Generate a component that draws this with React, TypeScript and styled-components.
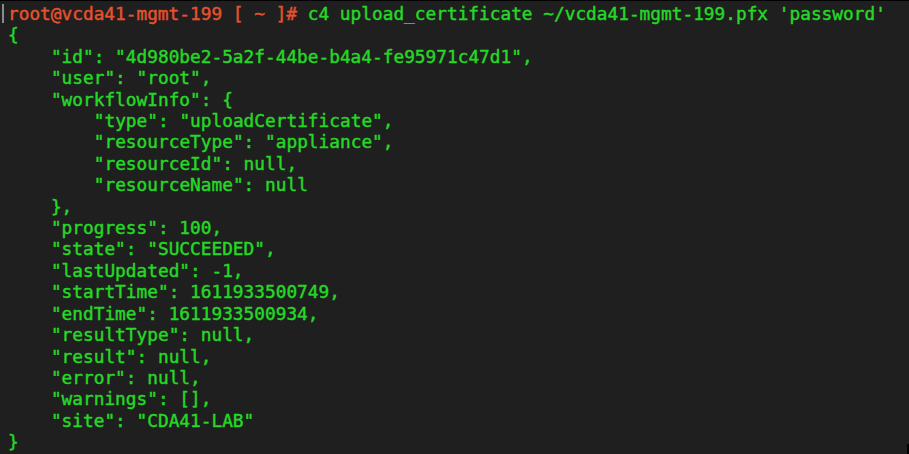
import React from "react";
import styled, { createGlobalStyle } from "styled-components";

const Global = createGlobalStyle`
  html, body { margin: 0; padding: 0; background: #1f1f1f; }
  #root { width: 909px; height: 454px; overflow: hidden; }
`;

const Terminal = styled.div`
  box-sizing: border-box;
  width: 909px;
  height: 454px;
  background: #1f1f1f;
  border-top: 1px solid #000;
  padding: 2px 0 0 8px;
  position: relative;
  font-family: "DejaVu Sans Mono", "Liberation Mono", monospace;
  font-size: 17.8px;
  line-height: 21.4px;
  color: #25d826;
  -webkit-text-stroke: 0.45px currentColor;
`;

const Cursor = styled.div`
  position: absolute;
  left: 2px;
  top: 3px;
  width: 2px;
  height: 19px;
  background: #8a8a8a;
`;

const CornerMark = styled.div`
  position: absolute;
  right: 0;
  bottom: 0;
  width: 2px;
  height: 10px;
  background: #000;
`;

const Line = styled.div<{ $indent?: number }>`
  white-space: pre;
  padding-left: ${(p) => (p.$indent ?? 0) * 10.72}px;
`;

const Prompt = styled.span`
  color: #e4522e;
`;

const lines: [number, string][] = [
  [0, "{"],
  [4, '"id": "4d980be2-5a2f-44be-b4a4-fe95971c47d1",'],
  [4, '"user": "root",'],
  [4, '"workflowInfo": {'],
  [8, '"type": "uploadCertificate",'],
  [8, '"resourceType": "appliance",'],
  [8, '"resourceId": null,'],
  [8, '"resourceName": null'],
  [4, "},"],
  [4, '"progress": 100,'],
  [4, '"state": "SUCCEEDED",'],
  [4, '"lastUpdated": -1,'],
  [4, '"startTime": 1611933500749,'],
  [4, '"endTime": 1611933500934,'],
  [4, '"resultType": null,'],
  [4, '"result": null,'],
  [4, '"error": null,'],
  [4, '"warnings": [],'],
  [4, '"site": "CDA41-LAB"'],
  [0, "}"],
];

export default function App() {
  return (
    <>
      <Global />
      <Terminal>
        <Cursor />
        <CornerMark />
        <Line>
          <Prompt>root@vcda41-mgmt-199 [ ~ ]#</Prompt>
          {" c4 upload_certificate ~/vcda41-mgmt-199.pfx 'password'"}
        </Line>
        {lines.map(([indent, text], i) => (
          <Line key={i} $indent={indent}>
            {text}
          </Line>
        ))}
      </Terminal>
    </>
  );
}
